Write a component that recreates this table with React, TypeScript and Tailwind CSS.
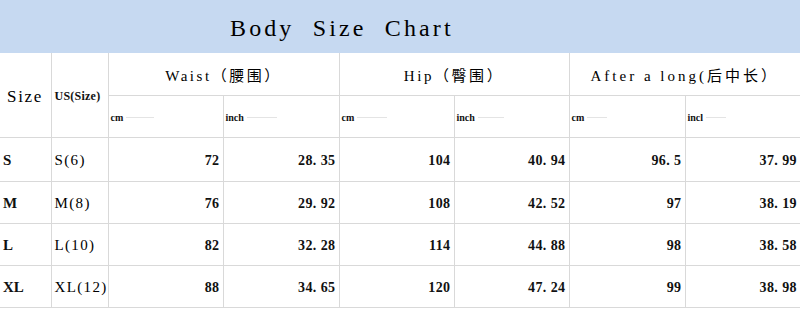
import React from "react";

type Row = { size: string; us: string; vals: string[] };

const rows: Row[] = [
  { size: "S", us: "S(6)", vals: ["72", "28. 35", "104", "40. 94", "96. 5", "37. 99"] },
  { size: "M", us: "M(8)", vals: ["76", "29. 92", "108", "42. 52", "97", "38. 19"] },
  { size: "L", us: "L(10)", vals: ["82", "32. 28", "114", "44. 88", "98", "38. 58"] },
  { size: "XL", us: "XL(12)", vals: ["88", "34. 65", "120", "47. 24", "99", "38. 98"] },
];

const units = [
  { label: "cm", dash: "w-[28px]" },
  { label: "inch", dash: "w-[30px]" },
  { label: "cm", dash: "w-[30px]" },
  { label: "inch", dash: "w-[26px]" },
  { label: "cm", dash: "w-[20px]" },
  { label: "incl", dash: "w-[20px]" },
];

const font = { fontFamily: '"Liberation Serif", "Noto Sans CJK SC", serif' };
const line = "border border-[#d9d9d9]";

export default function App() {
  return (
    <div className="h-[312px] w-[800px] overflow-hidden bg-white text-[#111]" style={font}>
      <div className="flex h-[53px] items-center bg-[#c6d9f1] pl-[230px] pt-[3px]">
        <span className="whitespace-pre text-[24px] tracking-[0.13em] text-black">Body  Size  Chart</span>
      </div>
      <table className="w-[800px] table-fixed border-collapse">
        <colgroup>
          <col className="w-[51px]" />
          <col className="w-[57px]" />
          <col className="w-[115px]" />
          <col className="w-[116px]" />
          <col className="w-[115px]" />
          <col className="w-[115px]" />
          <col className="w-[116px]" />
          <col className="w-[115px]" />
        </colgroup>
        <thead>
          <tr className="h-[42px]">
            <td rowSpan={2} className={`${line} border-t-0 border-l-0 pl-[7px] pt-[4px] text-[17px] tracking-[0.1em] text-black`}>
              Size
            </td>
            <td rowSpan={2} className={`${line} border-t-0 pl-[3px] pt-[3px] text-[12px] font-bold tracking-[0.02em]`}>
              US(Size)
            </td>
            <td colSpan={2} className={`${line} border-t-0 pt-[4px] text-center text-[15px] tracking-[0.17em] text-black`}>
              Waist（腰围）
            </td>
            <td colSpan={2} className={`${line} border-t-0 pt-[4px] text-center text-[15px] tracking-[0.17em] text-black`}>
              Hip（臀围）
            </td>
            <td colSpan={2} className={`${line} border-t-0 border-r-0 pt-[4px] text-center text-[15px] tracking-[0.2em] text-black`}>
              After a long(后中长）
            </td>
          </tr>
          <tr className="h-[42px]">
            {units.map((u, i) => (
              <td key={i} className={`${line} ${i === 5 ? "border-r-0" : ""} pl-[2px] pt-[2px]`}>
                <div className="flex items-center gap-[3px] text-[10px] font-bold">
                  <span>{u.label}</span>
                  <span className={`h-px ${u.dash} bg-[#e4e4e4]`} />
                </div>
              </td>
            ))}
          </tr>
        </thead>
        <tbody>
          {rows.map((r, ri) => (
            <tr key={r.size} className={ri === 0 ? "h-[44px]" : "h-[42px]"}>
              <td className={`${line} border-l-0 pl-[3px] pt-[2px] text-[15px] font-bold`}>{r.size}</td>
              <td className={`${line} pl-[3px] pt-[2px] text-[15px] tracking-[0.09em] text-black`}>{r.us}</td>
              {r.vals.map((v, vi) => (
                <td
                  key={vi}
                  className={`${line} ${vi === 5 ? "border-r-0" : ""} whitespace-pre pr-[3px] pt-[2px] text-right text-[14px] font-bold tracking-[0.03em]`}
                >
                  {v}
                </td>
              ))}
            </tr>
          ))}
          <tr className="h-[6px]">
            <td colSpan={8} className="border-t border-[#d9d9d9]" />
          </tr>
        </tbody>
      </table>
    </div>
  );
}
